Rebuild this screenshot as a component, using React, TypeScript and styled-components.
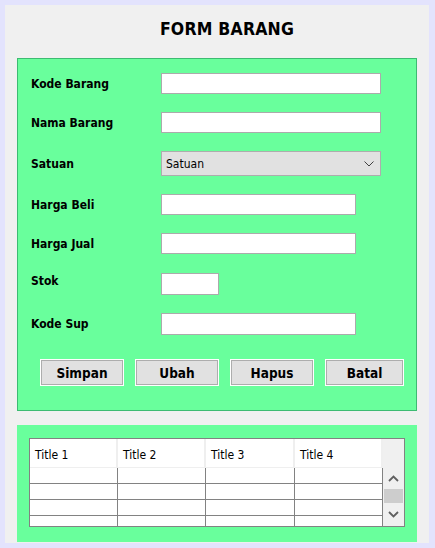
import React from "react";
import styled, { createGlobalStyle } from "styled-components";

const Global = createGlobalStyle`
  html, body { margin: 0; padding: 0; background: #e3e3fd; }
  * { box-sizing: border-box; }
`;

const FONT = `"DejaVu Sans Condensed", "DejaVu Sans", "Liberation Sans", sans-serif`;

const Frame = styled.div`
  width: 435px;
  height: 548px;
  border-style: solid;
  border-color: #e3e3fd;
  border-width: 5px 6px 5px 5px;
  background: #f0f0f0;
  font-family: ${FONT};
  color: #000;
  display: flex;
  flex-direction: column;
  padding: 0 12px 0 12px;
`;

const Title = styled.h1`
  margin: 0;
  height: 53px;
  display: flex;
  align-items: center;
  justify-content: center;
  padding: 0 0 5px 20px;
  font-size: 17.5px;
  font-weight: bold;
  letter-spacing: 0.2px;
`;

const FormPanel = styled.section`
  height: 353px;
  background: #69ff9c;
  border: 1px solid #3dbb72;
  display: flex;
  flex-direction: column;
  padding: 14px 0 0 13px;
`;

const Row = styled.div<{ $h: number; $mt: number }>`
  display: flex;
  align-items: center;
  height: ${(p) => p.$h}px;
  margin-top: ${(p) => p.$mt}px;
`;

const Label = styled.label<{ $shift?: number }>`
  width: 130px;
  font-size: 12px;
  font-weight: bold;
  position: relative;
  top: ${(p) => p.$shift ?? 0}px;
`;

const Field = styled.input<{ $w: number }>`
  width: ${(p) => p.$w}px;
  height: 100%;
  border: 1px solid #ababab;
  background: #fff;
  margin: 0;
  padding: 0 3px;
  outline: none;
  font-family: ${FONT};
`;

const Combo = styled.div`
  width: 220px;
  height: 100%;
  border: 1px solid #adadad;
  background: #e1e1e1;
  display: flex;
  align-items: center;
  justify-content: space-between;
  padding: 0 6px 0 4px;
  font-size: 12px;
`;

const ButtonBar = styled.div`
  display: flex;
  gap: 13px;
  margin-top: 25px;
  padding-left: 10px;
`;

const Btn = styled.button<{ $w: number }>`
  width: ${(p) => p.$w}px;
  height: 25px;
  margin: 0;
  padding: 0;
  background: #e1e1e1;
  border: 1px solid #adadad;
  outline: 1px solid #ffffff;
  outline-offset: 0;
  font-family: ${FONT};
  font-size: 13.5px;
  font-weight: bold;
  color: #000;
`;

const TablePanel = styled.section`
  margin-top: 14px;
  height: 117px;
  background: #69ff9c;
  padding: 13px 0 0 12px;
`;

const Table = styled.div`
  width: 376px;
  height: 89px;
  border: 1px solid #828282;
  display: flex;
  background: #fff;
`;

const Grid = styled.div`
  width: 353px;
  display: flex;
  flex-direction: column;
  overflow: hidden;
`;

const HeaderRow = styled.div`
  display: flex;
  height: 29px;
  border-bottom: 1px solid #efefef;
  flex-shrink: 0;
`;

const HeadCell = styled.div<{ $w: number }>`
  width: ${(p) => p.$w}px;
  height: 100%;
  display: flex;
  align-items: center;
  padding: 3px 0 0 5px;
  font-size: 12px;
  border-right: 2px solid #efefef;
  background: #fff;
`;

const BodyRow = styled.div`
  display: flex;
  height: 16px;
  border-bottom: 1px solid #828282;
  flex-shrink: 0;
`;

const BodyCell = styled.div<{ $w: number }>`
  width: ${(p) => p.$w}px;
  height: 100%;
  border-right: 1px solid #828282;
`;

const Scroll = styled.div`
  width: 21px;
  background: #f0f0f0;
  display: flex;
  flex-direction: column;
  align-items: center;
  padding-top: 36px;
`;

const Thumb = styled.div`
  width: 19px;
  height: 14px;
  background: #cdcdcd;
  margin: 7px 0 8px 0;
`;

const Chevron = ({ up }: { up?: boolean }) => (
  <svg width="11" height="7" viewBox="0 0 11 7">
    <path
      d={up ? "M1 6 L5.5 1.5 L10 6" : "M1 1 L5.5 5.5 L10 1"}
      fill="none"
      stroke="#606060"
      strokeWidth="1.8"
    />
  </svg>
);

const ComboArrow = () => (
  <svg width="10" height="6" viewBox="0 0 10 6">
    <path d="M0.5 0.5 L5 5 L9.5 0.5" fill="none" stroke="#404040" strokeWidth="1" />
  </svg>
);

const fields = [
  { label: "Kode Barang", w: 220, h: 21, mt: 0 },
  { label: "Nama Barang", w: 220, h: 21, mt: 18 },
];

const fields2 = [
  { label: "Harga Beli", w: 195, h: 21, mt: 18, shift: 0 },
  { label: "Harga Jual", w: 195, h: 21, mt: 18, shift: 0 },
  { label: "Stok", w: 58, h: 22, mt: 19, shift: -3 },
  { label: "Kode Sup", w: 195, h: 22, mt: 18, shift: 0 },
];

const colW = [88, 88, 89, 88];

export default function App() {
  return (
    <>
      <Global />
      <Frame>
        <Title>FORM BARANG</Title>
        <FormPanel>
          {fields.map((f) => (
            <Row key={f.label} $h={f.h} $mt={f.mt}>
              <Label>{f.label}</Label>
              <Field $w={f.w} />
            </Row>
          ))}
          <Row $h={25} $mt={18}>
            <Label>Satuan</Label>
            <Combo>
              <span>Satuan</span>
              <ComboArrow />
            </Combo>
          </Row>
          {fields2.map((f) => (
            <Row key={f.label} $h={f.h} $mt={f.mt}>
              <Label $shift={f.shift}>{f.label}</Label>
              <Field $w={f.w} />
            </Row>
          ))}
          <ButtonBar>
            <Btn $w={82}>Simpan</Btn>
            <Btn $w={82}>Ubah</Btn>
            <Btn $w={82}>Hapus</Btn>
            <Btn $w={77}>Batal</Btn>
          </ButtonBar>
        </FormPanel>
        <TablePanel>
          <Table>
            <Grid>
              <HeaderRow>
                {["Title 1", "Title 2", "Title 3", "Title 4"].map((t, i) => (
                  <HeadCell key={t} $w={colW[i]}>
                    {t}
                  </HeadCell>
                ))}
              </HeaderRow>
              {[0, 1, 2, 3].map((r) => (
                <BodyRow key={r}>
                  {colW.map((w, i) => (
                    <BodyCell key={i} $w={w} />
                  ))}
                </BodyRow>
              ))}
            </Grid>
            <Scroll>
              <Chevron up />
              <Thumb />
              <Chevron />
            </Scroll>
          </Table>
        </TablePanel>
      </Frame>
    </>
  );
}
